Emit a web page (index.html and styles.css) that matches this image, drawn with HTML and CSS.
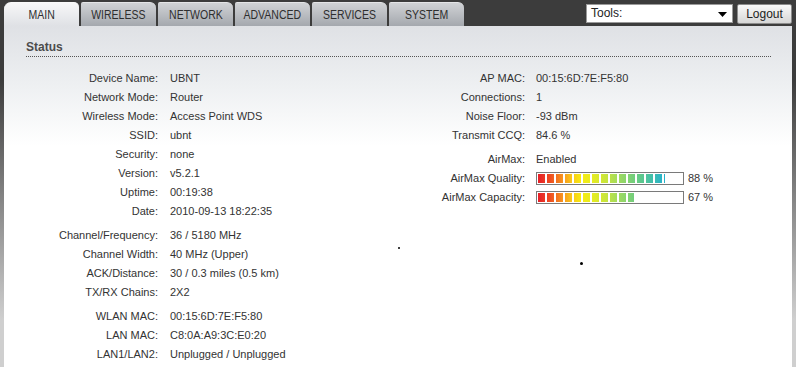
FILE: index.html
```html
<!DOCTYPE html>
<html lang="en">
<head>
  <meta charset="UTF-8">
  <title>Main - Status</title>
  <link rel="stylesheet" href="styles.css">
</head>
<body>
  <div class="topbar">
    <ul class="tabs">
      <li class="tab active"><span>MAIN</span></li>
      <li class="tab"><span>WIRELESS</span></li>
      <li class="tab"><span>NETWORK</span></li>
      <li class="tab"><span>ADVANCED</span></li>
      <li class="tab"><span>SERVICES</span></li>
      <li class="tab"><span>SYSTEM</span></li>
    </ul>
    <div class="tools">
      <div class="tools-select">
        <span>Tools:</span>
        <svg width="9" height="5" viewBox="0 0 9 5"><path d="M0 0h9L4.5 5z" fill="#000"/></svg>
      </div>
      <button class="logout">Logout</button>
    </div>
  </div>

  <main class="panel">
    <h2 class="section-title">Status</h2>
    <div class="columns">
      <div class="col col-left">
        <dl class="info">
          <dt>Device Name:</dt><dd>UBNT</dd>
          <dt>Network Mode:</dt><dd>Router</dd>
          <dt>Wireless Mode:</dt><dd>Access Point WDS</dd>
          <dt>SSID:</dt><dd>ubnt</dd>
          <dt>Security:</dt><dd>none</dd>
          <dt>Version:</dt><dd>v5.2.1</dd>
          <dt>Uptime:</dt><dd>00:19:38</dd>
          <dt>Date:</dt><dd>2010-09-13 18:22:35</dd>
        </dl>
        <dl class="info">
          <dt>Channel/Frequency:</dt><dd>36 / 5180 MHz</dd>
          <dt>Channel Width:</dt><dd>40 MHz (Upper)</dd>
          <dt>ACK/Distance:</dt><dd>30 / 0.3 miles (0.5 km)</dd>
          <dt>TX/RX Chains:</dt><dd>2X2</dd>
        </dl>
        <dl class="info">
          <dt>WLAN MAC:</dt><dd>00:15:6D:7E:F5:80</dd>
          <dt>LAN MAC:</dt><dd>C8:0A:A9:3C:E0:20</dd>
          <dt>LAN1/LAN2:</dt><dd>Unplugged / Unplugged</dd>
        </dl>
      </div>
      <div class="col col-right">
        <dl class="info">
          <dt>AP MAC:</dt><dd>00:15:6D:7E:F5:80</dd>
          <dt>Connections:</dt><dd>1</dd>
          <dt>Noise Floor:</dt><dd>-93 dBm</dd>
          <dt>Transmit CCQ:</dt><dd>84.6 %</dd>
        </dl>
        <dl class="info">
          <dt>AirMax:</dt><dd>Enabled</dd>
          <dt>AirMax Quality:</dt>
          <dd class="meter-row">
            <div class="meter"><div class="meter-fill" style="width: 88%"></div></div>
            <span>88 %</span>
          </dd>
          <dt>AirMax Capacity:</dt>
          <dd class="meter-row">
            <div class="meter"><div class="meter-fill" style="width: 67%"></div></div>
            <span>67 %</span>
          </dd>
        </dl>
      </div>
    </div>
    <span class="speck speck-a"></span>
    <span class="speck speck-b"></span>
  </main>
</body>
</html>
```

FILE: styles.css
```css
/* Page */
body {
  margin: 0;
  font-family: 'Liberation Sans', Arial, sans-serif;
  font-size: 11px;
  color: #333;
  background: linear-gradient(#3c3c3c 0, #3c3c3c 80px, #cfcfcf 320px);
  height: 367px;
  overflow: hidden;
}

/* Top bar */
.topbar {
  display: flex;
  justify-content: space-between;
  align-items: flex-end;
  height: 26px;
  padding: 0 4px;
}
.tabs {
  display: flex;
  gap: 1px;
  margin: 0;
  padding: 0;
  list-style: none;
}
.tab {
  width: 75px;
  height: 23px;
  line-height: 24px;
  text-align: center;
  font-size: 12.5px;
  color: #2e2e2e;
  background: linear-gradient(#d0d2d5, #a4a8ae);
  border-top: 1px solid #e4e5e7;
  border-radius: 2px 6px 0 0;
}
.tab span {
  display: inline-block;
  transform: scaleX(0.84);
}
.tab + .tab {
  margin-left: 1px;
}
.tab.active {
  background: linear-gradient(#f7f7f8, #dfe1e5);
  border-top-color: #fafafa;
  border-radius: 7px 5px 0 0;
}
.tools {
  display: flex;
  gap: 4px;
  align-self: center;
  margin-top: 1px;
}
.tools-select {
  display: flex;
  justify-content: space-between;
  align-items: center;
  width: 137px;
  height: 17px;
  padding: 0 4px;
  background: #fff;
  border: 1px solid #9a9a9a;
  font-size: 12px;
  color: #222;
}
.tools-select svg {
  margin-top: 2px;
  margin-right: 1px;
}
.logout {
  height: 20px;
  width: 55px;
  padding: 0;
  font-family: 'Liberation Sans', Arial, sans-serif;
  font-size: 12px;
  color: #222;
  background: linear-gradient(#fafafa, #d6d6d6);
  border: 1px solid #8c8c8c;
  border-radius: 2px;
}

/* Panel */
.panel {
  position: relative;
  box-sizing: border-box;
  height: 341px;
  margin: 0 4px;
  padding: 14px 21px 0 22px;
  overflow: hidden;
  background: linear-gradient(#dfe1e5 0, #eef0f2 60px, #fff 120px);
}
.section-title {
  margin: 0;
  padding-bottom: 2px;
  font-size: 12px;
  font-weight: bold;
  color: #4c4c4c;
  border-bottom: 1px dotted #555;
}
.columns {
  display: flex;
  padding-top: 12px;
}
.col-left {
  width: 374px;
}
.info {
  display: grid;
  margin: 0 0 5px;
  line-height: 19px;
}
.col-left .info {
  grid-template-columns: 132px 1fr;
  column-gap: 12px;
}
.col-right .info {
  grid-template-columns: 125px 1fr;
  column-gap: 11px;
}
.info dt {
  text-align: right;
}
.info dd {
  margin: 0;
}

/* Bars */
.meter-row {
  display: flex;
  align-items: center;
  gap: 4px;
}
.meter {
  width: 144px;
  height: 9px;
  padding: 1px;
  background: #fff;
  border: 1px solid #7a7a7a;
}
.meter-fill {
  height: 100%;
  background:
    repeating-linear-gradient(to right, transparent 0 7px, #fff 7px 9px),
    linear-gradient(to right, #e61e28 0, #ee4a22 8%, #f7931e 17%, #f9c51a 23%, #f7ec12 30%, #e6ec22 38%, #c9e53c 47%, #a4dc5c 55%, #86d370 62%, #64ca86 70%, #46c0a6 78%, #2ab4c8 86%, #22a8d0 100%);
  background-size: auto, 144px 100%;
  background-repeat: repeat, no-repeat;
}

/* stray marks from the capture */
.speck {
  position: absolute;
  background: #000;
  border-radius: 50%;
}
.speck-a {
  left: 394px;
  top: 221px;
  width: 2px;
  height: 2px;
}
.speck-b {
  left: 576px;
  top: 236px;
  width: 3px;
  height: 3px;
}
```
